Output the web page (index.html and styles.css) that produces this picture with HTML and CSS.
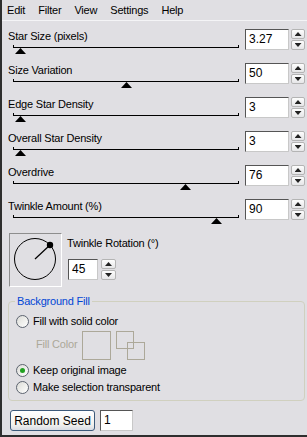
FILE: index.html
```html
<!DOCTYPE html>
<html lang="en">

<head>
    <meta charset="UTF-8">
    <meta name="viewport" content="width=device-width, initial-scale=1.0">
    <title>Star Effect</title>
    <link rel="stylesheet" href="styles.css">
</head>

<body>
    <div class="window">
        <div class="menubar">
            <span>Edit</span>
            <span>Filter</span>
            <span>View</span>
            <span>Settings</span>
            <span>Help</span>
        </div>

        <div class="params">
            <div class="param">
                <div class="param-main">
                    <div class="param-label">Star Size (pixels)</div>
                    <div class="track"><span class="thumb" style="left:2px"></span></div>
                </div>
                <div class="edit">3.27</div>
                <div class="spin"><span class="spin-up"></span><span class="spin-down"></span></div>
            </div>
            <div class="param">
                <div class="param-main">
                    <div class="param-label">Size Variation</div>
                    <div class="track"><span class="thumb" style="left:108px"></span></div>
                </div>
                <div class="edit">50</div>
                <div class="spin"><span class="spin-up"></span><span class="spin-down"></span></div>
            </div>
            <div class="param">
                <div class="param-main">
                    <div class="param-label">Edge Star Density</div>
                    <div class="track"><span class="thumb" style="left:2px"></span></div>
                </div>
                <div class="edit">3</div>
                <div class="spin"><span class="spin-up"></span><span class="spin-down"></span></div>
            </div>
            <div class="param">
                <div class="param-main">
                    <div class="param-label">Overall Star Density</div>
                    <div class="track"><span class="thumb" style="left:2px"></span></div>
                </div>
                <div class="edit">3</div>
                <div class="spin"><span class="spin-up"></span><span class="spin-down"></span></div>
            </div>
            <div class="param">
                <div class="param-main">
                    <div class="param-label">Overdrive</div>
                    <div class="track"><span class="thumb" style="left:167px"></span></div>
                </div>
                <div class="edit">76</div>
                <div class="spin"><span class="spin-up"></span><span class="spin-down"></span></div>
            </div>
            <div class="param">
                <div class="param-main">
                    <div class="param-label">Twinkle Amount (%)</div>
                    <div class="track"><span class="thumb" style="left:198px"></span></div>
                </div>
                <div class="edit">90</div>
                <div class="spin"><span class="spin-up"></span><span class="spin-down"></span></div>
            </div>
        </div>

        <div class="rotation">
            <div class="dial">
                <svg width="51" height="52" viewBox="0 0 51 52">
                    <circle cx="25" cy="25" r="20.5" fill="none" stroke="#000" stroke-width="1" />
                    <line x1="25" y1="25" x2="40" y2="11" stroke="#000" stroke-width="1.2" />
                    <circle cx="40" cy="11" r="3.2" fill="#000" />
                </svg>
            </div>
            <div class="rotation-side">
                <div class="param-label">Twinkle Rotation (°)</div>
                <div class="rotation-input">
                    <div class="edit edit-small">45</div>
                    <div class="spin spin-wide"><span class="spin-up"></span><span class="spin-down"></span></div>
                </div>
            </div>
        </div>

        <fieldset class="group">
            <legend>Background Fill</legend>
            <div class="radio-row">
                <span class="radio"></span>
                <span>Fill with solid color</span>
            </div>
            <div class="fill-row">
                <span class="fill-label">Fill Color</span>
                <span class="swatch"></span>
                <span class="swatch-pair">
                    <span class="swatch-small"></span>
                    <span class="swatch-small swatch-back"></span>
                </span>
            </div>
            <div class="radio-row radio-row-keep">
                <span class="radio checked"></span>
                <span>Keep original image</span>
            </div>
            <div class="radio-row radio-row-last">
                <span class="radio"></span>
                <span>Make selection transparent</span>
            </div>
        </fieldset>

        <div class="seed-row">
            <button class="btn">Random Seed</button>
            <div class="edit edit-seed">1</div>
        </div>
    </div>
</body>

</html>
```

FILE: styles.css
```css
* {
    box-sizing: border-box;
}

body {
    margin: 0;
    font-family: "Liberation Sans", Arial, sans-serif;
    font-size: 11px;
    letter-spacing: -0.2px;
    color: #000;
    background: #e0dfe3;
}

.window {
    width: 307px;
    height: 437px;
    background: #e0dfe3;
    border-left: 2px solid #2e2e2e;
    border-bottom: 2px solid #2e2e2e;
}

/* menu */

.menubar {
    display: flex;
    gap: 13px;
    height: 21px;
    padding-left: 5px;
    align-items: center;
    border-bottom: 1px solid #f4f4f6;
}

/* slider rows */

.params {
    padding-top: 8px;
}

.param {
    display: flex;
    height: 34px;
    padding-left: 6px;
}

.param-main {
    width: 232px;
}

.param-label {
    height: 14px;
    line-height: 14px;
    white-space: nowrap;
}

.track {
    position: relative;
    width: 226px;
    height: 8px;
    margin: 4px 0 0 5px;
    border-top: 1px solid #000;
}

.track:before,
.track:after {
    content: '';
    position: absolute;
    top: -3px;
    width: 1px;
    height: 3px;
    background: #000;
}

.track:before {
    left: 0;
}

.track:after {
    right: 0;
}

.thumb {
    position: absolute;
    top: 0;
    width: 11px;
    height: 6px;
    background: #000;
    clip-path: polygon(50% 0, 100% 100%, 0 100%);
}

.edit {
    width: 44px;
    height: 21px;
    margin-left: 5px;
    padding-left: 3px;
    line-height: 19px;
    font-size: 12px;
    letter-spacing: 0;
    background: #fff;
    border: 1px solid;
    border-color: #555 #c8c8c8 #c8c8c8 #555;
}

.spin {
    display: flex;
    flex-direction: column;
    gap: 1px;
    width: 14px;
    height: 21px;
    margin-left: 2px;
}

.spin span {
    position: relative;
    flex: 1;
    border: 1px solid #b4b4b4;
    border-radius: 2px;
    background: linear-gradient(#fdfdfd, #e6e6e8);
}

.spin span:before {
    content: '';
    position: absolute;
    left: 50%;
    top: 50%;
    width: 7px;
    height: 4px;
    margin: -2px 0 0 -3.5px;
    background: #222;
}

.spin-up:before {
    clip-path: polygon(50% 0, 100% 100%, 0 100%);
}

.spin-down:before {
    clip-path: polygon(0 0, 100% 0, 50% 100%);
}

/* rotation */

.rotation {
    display: flex;
    gap: 5px;
    padding-left: 7px;
}

.dial {
    width: 53px;
    height: 54px;
    border: 1px solid;
    border-color: #8e8e8e #fff #fff #8e8e8e;
}

.dial svg {
    display: block;
}

.rotation-side {
    padding-top: 3px;
}

.rotation-input {
    display: flex;
    margin-top: 9px;
}

.edit-small {
    width: 30px;
    margin-left: 1px;
}

.spin-wide {
    width: 15px;
    margin-left: 3px;
}

/* background fill group */

.group {
    margin: 8px 2px 0 6px;
    padding: 0 0 5px 7px;
    border: 1px solid #d0d0bf;
    border-radius: 4px;
}

.group legend {
    padding: 0 2px;
    margin-left: -1px;
    line-height: 13px;
    color: #0046d5;
}

.radio-row {
    display: flex;
    align-items: center;
    gap: 4px;
    height: 16px;
    margin-top: 5px;
}

.radio-row-keep {
    margin-top: 2px;
}

.radio-row-last {
    margin-top: 1px;
}

.radio {
    position: relative;
    width: 13px;
    height: 13px;
    border: 1px solid #5d6470;
    border-radius: 50%;
    background: linear-gradient(135deg, #dcdcd7, #fff);
}

.radio.checked:after {
    content: '';
    position: absolute;
    left: 3px;
    top: 3px;
    width: 5px;
    height: 5px;
    border-radius: 50%;
    background: #21a121;
}

.fill-row {
    display: flex;
    height: 29px;
    margin: 2px 0 0 20px;
}

.fill-label {
    width: 46px;
    color: #aca899;
    line-height: 26px;
}

.swatch {
    width: 29px;
    height: 29px;
    border: 1px solid #aca899;
}

.swatch-pair {
    display: flex;
    flex-direction: column;
    margin-left: 5px;
}

.swatch-small {
    width: 18px;
    height: 18px;
    border: 1px solid #aca899;
    background: #e0dfe3;
}

.swatch-back {
    margin: -7px 0 0 11px;
    background: transparent;
}

/* seed */

.seed-row {
    display: flex;
    gap: 5px;
    margin: 9px 0 0 8px;
}

.btn {
    width: 85px;
    height: 21px;
    padding: 0;
    font-family: inherit;
    font-size: 12px;
    letter-spacing: 0;
    color: #000;
    border: 1px solid #3c5a7a;
    border-radius: 3px;
    background: linear-gradient(#fff, #f2f2ee 70%, #d8dce4);
}

.edit-seed {
    width: 33px;
    margin-left: 0;
}
```
